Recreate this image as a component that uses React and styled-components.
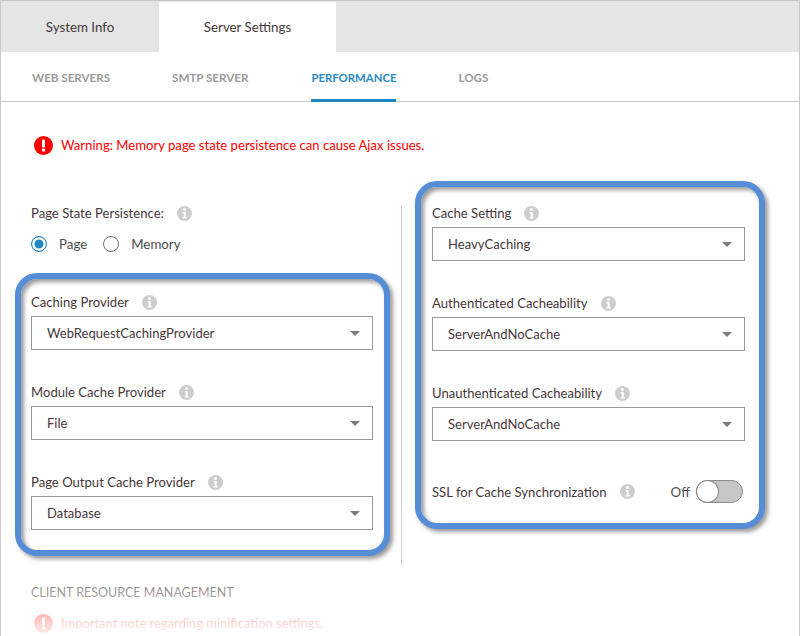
import styled, { createGlobalStyle } from "styled-components";

const Global = createGlobalStyle`
  html, body { margin: 0; padding: 0; background: #fff; }
  body { font-family: Lato, "Open Sans", sans-serif; }
`;

const Page = styled.div`
  position: relative;
  width: 800px;
  height: 636px;
  box-sizing: border-box;
  overflow: hidden;
  background: #fff;
  border-top: 1px solid #c8c8c8;
  border-left: 1px solid #c8c8c8;
  border-right: 1px solid #c8c8c8;
`;

const TabBar = styled.div`
  display: flex;
  height: 51px;
  padding-top: 1px;
  box-sizing: border-box;
  background: #e4e6e5;
`;

const Tab = styled.div`
  width: ${(p) => p.$w}px;
  display: flex;
  align-items: center;
  justify-content: center;
  font-size: 13.3px;
  color: #46373a;
  background: ${(p) => (p.$active ? "#fff" : "transparent")};
`;

const SubNav = styled.div`
  display: flex;
  height: 50px;
  box-sizing: border-box;
  padding-left: 31px;
  border-bottom: 1px solid #c8c8c8;
`;

const SubItem = styled.div`
  margin: 0 62px 0 ${(p) => (p.$active ? 1 : 0)}px;
  height: 50px;
  box-sizing: border-box;
  padding-top: 19px;
  font-size: ${(p) => (p.$active ? 11.35 : 11.6)}px;
  font-weight: 700;
  color: ${(p) => (p.$active ? "#2a8ac4" : "#9a9a9a")};
  border-bottom: ${(p) => (p.$active ? "3px solid #2186c4" : "none")};
`;

const Warning = styled.div`
  display: flex;
  align-items: center;
  gap: 8px;
  padding: 33px 0 0 33px;
  height: 20px;
  font-size: 13.12px;
  color: #ff0000;
`;

const Columns = styled.div`
  display: flex;
`;

const LeftCol = styled.div`
  width: 400px;
  box-sizing: border-box;
  padding: 50px 0 0 14px;
`;

const RightCol = styled.div`
  position: relative;
  padding: 26px 0 0 14px;
  &::before {
    content: "";
    position: absolute;
    left: 0;
    top: 51px;
    width: 1px;
    height: 359px;
    background: #cfcfcf;
  }
`;

const Highlight = styled.div`
  width: ${(p) => p.$w}px;
  height: ${(p) => p.$h}px;
  box-sizing: border-box;
  padding: ${(p) => p.$pad};
  border: 6px solid #568dd6;
  border-radius: 22px;
  background: #fff;
  box-shadow: 3px 3px 4px #9a9a9a, inset 3px 3px 4px #9a9a9a;
`;

const PlainField = styled.div`
  padding-left: 16px;
  height: 68px;
`;

const Label = styled.div`
  display: flex;
  align-items: center;
  gap: 13px;
  height: 16px;
  font-size: 13.1px;
  color: #46373a;
`;

const Radios = styled.div`
  display: flex;
  align-items: center;
  margin-top: 15px;
  font-size: 13.3px;
  color: #4b4b4b;
`;

const Radio = styled.span`
  width: 16px;
  height: 16px;
  box-sizing: border-box;
  border-radius: 50%;
  margin-right: 12px;
  border: 1px solid ${(p) => (p.$on ? "#2a8ac4" : "#777")};
  background: ${(p) => (p.$on ? "#2186c4" : "#fff")};
  box-shadow: ${(p) => (p.$on ? "inset 0 0 0 2.5px #fff" : "none")};
`;

const RadioText = styled.span`
  margin-right: 16px;
`;

const Field = styled.div`
  margin-bottom: ${(p) => p.$mb}px;
`;

const Select = styled.div`
  display: flex;
  align-items: center;
  justify-content: space-between;
  margin-top: 6px;
  width: ${(p) => p.$w}px;
  height: 34px;
  box-sizing: border-box;
  padding: 0 12px 0 15px;
  border: 1px solid #999;
  font-size: 13px;
  letter-spacing: 0.03px;
  color: #46373a;
`;

const Caret = styled.span`
  width: 0;
  height: 0;
  border-left: 5px solid transparent;
  border-right: 5px solid transparent;
  border-top: 5px solid #7c7c7c;
`;

const ToggleRow = styled.div`
  display: flex;
  align-items: center;
  justify-content: space-between;
  width: 311px;
  color: #46373a;
`;

const ToggleSide = styled.div`
  display: flex;
  align-items: center;
  gap: 6px;
  font-size: 13.3px;
  color: #4b4b4b;
`;

const Toggle = styled.span`
  position: relative;
  width: 47px;
  height: 23px;
  box-sizing: border-box;
  border-radius: 12px;
  border: 1px solid #8c8c8c;
  background: #c6c6c6;
  &::after {
    content: "";
    position: absolute;
    left: 0;
    top: 0;
    width: 21px;
    height: 21px;
    border-radius: 50%;
    background: #fff;
    box-shadow: 0 0 0 1px #8c8c8c;
  }
`;

const Section = styled.div`
  padding: 29px 0 0 16px;
  font-size: 12.5px;
  color: #46373a;
`;

const Note = styled(Warning)`
  padding: 13px 0 0 3px;
  font-size: 12.95px;
`;

const Fade = styled.div`
  position: absolute;
  left: 0;
  right: 0;
  bottom: 0;
  height: 66px;
  background: linear-gradient(rgba(255,255,255,0.25), rgba(255,255,255,0.95));
`;

const Info = () => (
  <svg width="15" height="15" viewBox="0 0 15 15">
    <circle cx="7.5" cy="7.5" r="7.5" fill="#cdcdcd" />
    <circle cx="7.5" cy="3.6" r="1.5" fill="#fff" />
    <path d="M5.7 6h3v5h1v1.4H5.7V11h1V7.4h-1z" fill="#fff" />
  </svg>
);

const Alert = () => (
  <svg width="19" height="19" viewBox="0 0 19 19" style={{ flex: "none" }}>
    <circle cx="9.5" cy="9.5" r="9.5" fill="#ff0000" />
    <rect x="8" y="3.5" width="3" height="8" rx="1" fill="#fff" />
    <circle cx="9.5" cy="14" r="1.7" fill="#fff" />
  </svg>
);

const SelectField = ({ label, value, w, mb }) => (
  <Field $mb={mb}>
    <Label>{label} <Info /></Label>
    <Select $w={w}>{value}<Caret /></Select>
  </Field>
);

export default function App() {
  return (
    <Page>
      <Global />
      <TabBar>
        <Tab $w={158}>System Info</Tab>
        <Tab $w={177} $active>Server Settings</Tab>
      </TabBar>
      <SubNav>
        <SubItem>WEB SERVERS</SubItem>
        <SubItem>SMTP SERVER</SubItem>
        <SubItem $active>PERFORMANCE</SubItem>
        <SubItem>LOGS</SubItem>
      </SubNav>
      <Warning><Alert />Warning: Memory page state persistence can cause Ajax issues.</Warning>
      <Columns>
        <LeftCol>
          <PlainField>
            <Label>Page State Persistence: <Info /></Label>
            <Radios>
              <Radio $on /><RadioText>Page</RadioText>
              <Radio /><RadioText>Memory</RadioText>
            </Radios>
          </PlainField>
          <Highlight $w={375} $h={283} $pad="15px 0 0 10px">
            <SelectField label="Caching Provider" value="WebRequestCachingProvider" w={342} mb={34} />
            <SelectField label="Module Cache Provider" value="File" w={342} mb={34} />
            <SelectField label="Page Output Cache Provider" value="Database" w={342} mb={0} />
          </Highlight>
          <Section>CLIENT RESOURCE MANAGEMENT
            <Note><Alert />Important note regarding minification settings.</Note>
          </Section>
        </LeftCol>
        <RightCol>
          <Highlight $w={350} $h={348} $pad="18px 0 0 11px">
            <SelectField label="Cache Setting" value="HeavyCaching" w={313} mb={34} />
            <SelectField label="Authenticated Cacheability" value="ServerAndNoCache" w={313} mb={34} />
            <SelectField label="Unauthenticated Cacheability" value="ServerAndNoCache" w={313} mb={39} />
            <ToggleRow>
              <Label>SSL for Cache Synchronization <Info /></Label>
              <ToggleSide>Off <Toggle /></ToggleSide>
            </ToggleRow>
          </Highlight>
        </RightCol>
      </Columns>
      <Fade />
    </Page>
  );
}
